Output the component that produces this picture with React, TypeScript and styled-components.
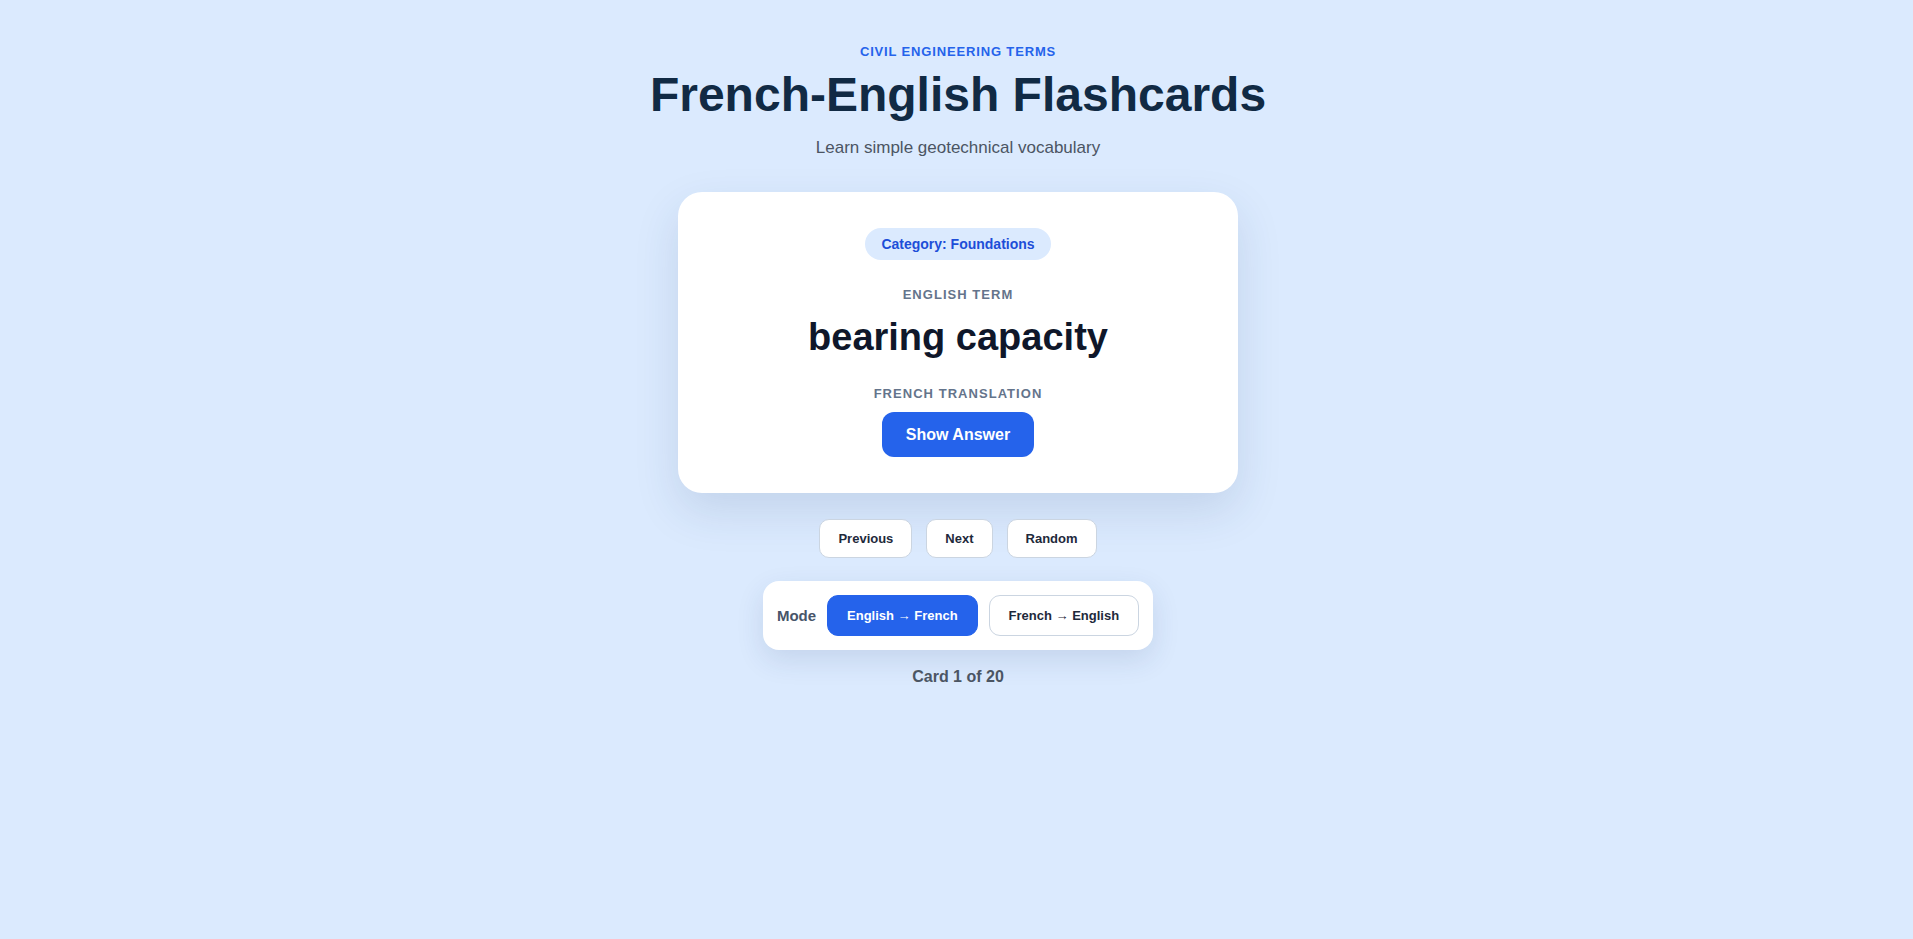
import React, { useState } from "react";
import styled, { createGlobalStyle } from "styled-components";

const GlobalStyle = createGlobalStyle`
  html, body {
    margin: 0;
    padding: 0;
    background: #dbeafe;
    font-family: "Liberation Sans", Arial, sans-serif;
  }
  * { box-sizing: border-box; }
`;

const Page = styled.main`
  min-height: 939px;
  display: flex;
  flex-direction: column;
  align-items: center;
  padding: 44px 0 0 3px;
  background: #dbeafe;
`;

const Eyebrow = styled.div`
  font-size: 13px;
  line-height: 16px;
  font-weight: 700;
  letter-spacing: 0.065em;
  text-transform: uppercase;
  color: #2563eb;
`;

const Title = styled.h1`
  margin: 6px 0 0;
  font-size: 48px;
  line-height: 58px;
  font-weight: 700;
  color: #112a44;
`;

const Subtitle = styled.p`
  margin: 14px 0 0;
  font-size: 17px;
  line-height: 20px;
  color: #4b5563;
`;

const Card = styled.section`
  margin-top: 34px;
  width: 560px;
  background: #ffffff;
  border-radius: 24px;
  padding: 36px 36px;
  display: flex;
  flex-direction: column;
  align-items: center;
  box-shadow: 0 18px 45px rgba(30, 58, 110, 0.13);
`;

const Badge = styled.span`
  display: inline-block;
  background: #dbeafe;
  color: #1d4ed8;
  font-size: 14px;
  line-height: 16px;
  font-weight: 700;
  padding: 8px 16px;
  border-radius: 999px;
`;

const Label = styled.div<{ $gap: number }>`
  margin-top: ${(p) => p.$gap}px;
  font-size: 13px;
  line-height: 16px;
  font-weight: 700;
  letter-spacing: 0.08em;
  text-transform: uppercase;
  color: #64748b;
`;

const Term = styled.div`
  margin-top: 11px;
  font-size: 38px;
  line-height: 46px;
  font-weight: 700;
  color: #0f172a;
`;

const PrimaryButton = styled.button`
  margin-top: 10px;
  border: none;
  background: #2563eb;
  color: #ffffff;
  font-family: inherit;
  font-size: 16px;
  line-height: 19px;
  font-weight: 700;
  padding: 13px 24px;
  border-radius: 12px;
  cursor: pointer;
`;

const NavRow = styled.div`
  margin-top: 26px;
  display: flex;
  gap: 14px;
`;

const NavButton = styled.button`
  background: #ffffff;
  border: 1px solid #cbd5e1;
  color: #1e293b;
  font-family: inherit;
  font-size: 13px;
  line-height: 15px;
  font-weight: 700;
  padding: 11px 18px;
  border-radius: 10px;
  cursor: pointer;
`;

const ModePanel = styled.div`
  margin-top: 23px;
  display: flex;
  align-items: center;
  gap: 11px;
  padding: 14px 14px;
  background: #ffffff;
  border-radius: 16px;
  box-shadow: 0 10px 28px rgba(30, 58, 110, 0.12);
`;

const ModeLabel = styled.span`
  font-size: 15px;
  font-weight: 700;
  color: #475569;
`;

const ModeButton = styled.button<{ $active: boolean }>`
  font-family: inherit;
  font-size: 13px;
  line-height: 15px;
  font-weight: 700;
  padding: 12px 19px;
  border-radius: 11px;
  cursor: pointer;
  border: 1px solid ${(p) => (p.$active ? "#2563eb" : "#cbd5e1")};
  background: ${(p) => (p.$active ? "#2563eb" : "#ffffff")};
  color: ${(p) => (p.$active ? "#ffffff" : "#1e293b")};
`;

const Counter = styled.div`
  margin-top: 18px;
  font-size: 16px;
  line-height: 18px;
  font-weight: 700;
  color: #4b5563;
`;

export default function App() {
  const [mode, setMode] = useState<"en-fr" | "fr-en">("en-fr");
  return (
    <>
      <GlobalStyle />
      <Page>
        <Eyebrow>Civil Engineering Terms</Eyebrow>
        <Title>French-English Flashcards</Title>
        <Subtitle>Learn simple geotechnical vocabulary</Subtitle>
        <Card>
          <Badge>Category: Foundations</Badge>
          <Label $gap={27}>English Term</Label>
          <Term>bearing capacity</Term>
          <Label $gap={26}>French Translation</Label>
          <PrimaryButton>Show Answer</PrimaryButton>
        </Card>
        <NavRow>
          <NavButton>Previous</NavButton>
          <NavButton>Next</NavButton>
          <NavButton>Random</NavButton>
        </NavRow>
        <ModePanel>
          <ModeLabel>Mode</ModeLabel>
          <ModeButton $active={mode === "en-fr"} onClick={() => setMode("en-fr")}>
            English → French
          </ModeButton>
          <ModeButton $active={mode === "fr-en"} onClick={() => setMode("fr-en")}>
            French → English
          </ModeButton>
        </ModePanel>
        <Counter>Card 1 of 20</Counter>
      </Page>
    </>
  );
}
